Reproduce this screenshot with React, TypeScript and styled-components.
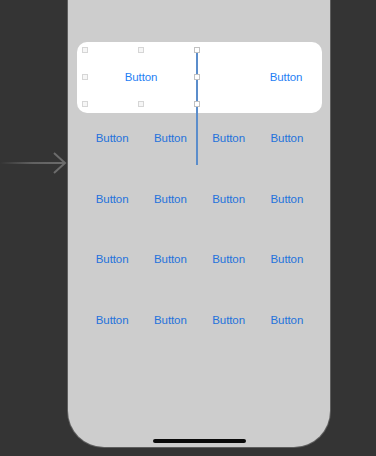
import styled, { createGlobalStyle } from 'styled-components'

const GlobalStyle = createGlobalStyle`
	html, body {
		margin: 0;
		padding: 0;
		background: #343434;
	}
	body {
		font-family: 'Liberation Sans', Arial, sans-serif;
	}
`
const Canvas = styled.div`
	display: flex;
	width: 376px;
	height: 456px;
	overflow: hidden;
`
const EntryColumn = styled.div`
	width: 68px;
	flex-shrink: 0;
	padding-top: 152px;
`
const Phone = styled.div`
	width: 262px;
	height: 447px;
	background: #cdcdcd;
	border-radius: 0 0 36px 36px;
	box-shadow: 0 0 0 1px #5e5e5e;
	display: flex;
	flex-direction: column;
	box-sizing: border-box;
	padding-top: 42px;
`
const Card = styled.div`
	margin: 0 8px 0 9px;
	height: 71px;
	box-sizing: border-box;
	padding: 8px 7px 9px 6px;
	background: #ffffff;
	border-radius: 10px;
	display: grid;
	grid-template-columns: repeat(4, 1fr);
`
const Cell = styled.div<{ $span?: number; $col?: number }>`
	position: relative;
	display: flex;
	align-items: center;
	justify-content: center;
	grid-column: ${({ $col, $span }) => ($col ? `${$col} / span ${$span || 1}` : `span ${$span || 1}`)};
`
const Grid = styled.div`
	margin: 15px 14px 0 15px;
	display: grid;
	grid-template-columns: repeat(4, 1fr);
	grid-auto-rows: 20px;
	row-gap: 40.7px;
`
const ButtonLabel = styled.span<{ $bright?: boolean }>`
	font-size: 11.5px;
	color: ${({ $bright }) => ($bright ? '#1f80f4' : '#2472dc')};
	letter-spacing: -0.1px;
`
const Selection = styled.div`
	position: absolute;
	top: 0;
	bottom: 0;
	left: 2px;
	right: 2px;
	pointer-events: none;
`
const Handle = styled.div<{ $x: number; $y: number; $onLine?: boolean }>`
	position: absolute;
	width: 6px;
	height: 6px;
	margin: -3px 0 0 -3px;
	box-sizing: border-box;
	background: ${({ $onLine }) => ($onLine ? '#ffffff' : '#f6f6f6')};
	border: 1px solid ${({ $onLine }) => ($onLine ? '#c2c2c2' : '#d6d6d6')};
	left: ${({ $x }) => $x * 100}%;
	top: ${({ $y }) => $y * 100}%;
	z-index: 2;
`
const Guide = styled.div`
	position: absolute;
	right: -1px;
	top: 0;
	width: 2px;
	height: 115px;
	background: #5b8dcb;
	z-index: 1;
`
const HomeIndicator = styled.div`
	margin: auto auto 4px auto;
	width: 93px;
	height: 4px;
	border-radius: 2px;
	background: #0a0a0a;
`

const EntryArrow: React.FC = () => (
	<svg width='68' height='22' viewBox='0 0 68 22'>
		<defs>
			<linearGradient id='shaft' x1='0' x2='1' y1='0' y2='0'>
				<stop offset='0' stopColor='#6c6c6c' stopOpacity='0' />
				<stop offset='0.5' stopColor='#6c6c6c' stopOpacity='0.8' />
				<stop offset='1' stopColor='#6c6c6c' />
			</linearGradient>
		</defs>
		<rect x='0' y='10' width='65' height='2' fill='url(#shaft)' />
		<path d='M54 1 L65 11 L54 21' fill='none' stroke='#6c6c6c' strokeWidth='2' />
	</svg>
)

const rows = [0, 1, 2, 3]
const cols = [0, 1, 2, 3]

const App: React.FC = () => {
	return (
		<>
			<GlobalStyle />
			<Canvas>
				<EntryColumn>
					<EntryArrow />
				</EntryColumn>
				<Phone>
					<Card>
						<Cell $span={2}>
							<ButtonLabel $bright>Button</ButtonLabel>
							<Selection>
								<Handle $x={0} $y={0} />
								<Handle $x={0.5} $y={0} />
								<Handle $x={1} $y={0} $onLine />
								<Handle $x={0} $y={0.5} />
								<Handle $x={1} $y={0.5} $onLine />
								<Handle $x={0} $y={1} />
								<Handle $x={0.5} $y={1} />
								<Handle $x={1} $y={1} $onLine />
								<Guide />
							</Selection>
						</Cell>
						<Cell $col={4}>
							<ButtonLabel $bright>Button</ButtonLabel>
						</Cell>
					</Card>
					<Grid>
						{rows.map((r) =>
							cols.map((c) => (
								<Cell key={`${r}-${c}`}>
									<ButtonLabel>Button</ButtonLabel>
								</Cell>
							))
						)}
					</Grid>
					<HomeIndicator />
				</Phone>
			</Canvas>
		</>
	)
}
export default App
